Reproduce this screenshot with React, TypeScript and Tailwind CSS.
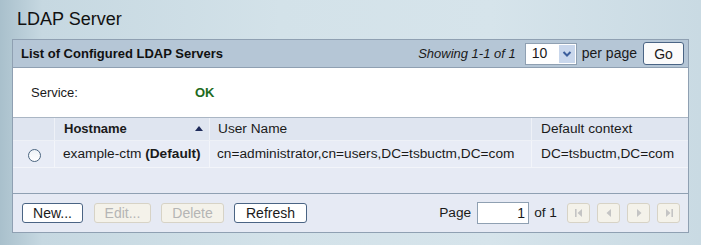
import React from "react";

const btn =
  "h-[20px] rounded-[3px] border text-[14px] leading-none flex items-center justify-center";

function NavBtn({ kind }: { kind: "first" | "prev" | "next" | "last" }) {
  return (
    <div className="w-[23px] h-[20px] rounded-[3px] border border-[#d7d3c6] bg-[#f4f2ea] flex items-center justify-center">
      <svg width="12" height="10" viewBox="0 0 12 10">
        {kind === "first" && (
          <>
            <rect x="2" y="1" width="1.6" height="8" fill="#c4c4c4" />
            <polygon points="9,1 9,9 4.5,5" fill="#c4c4c4" />
          </>
        )}
        {kind === "prev" && <polygon points="8,1 8,9 3.5,5" fill="#c4c4c4" />}
        {kind === "next" && <polygon points="4,1 4,9 8.5,5" fill="#c4c4c4" />}
        {kind === "last" && (
          <>
            <polygon points="3,1 3,9 7.5,5" fill="#c4c4c4" />
            <rect x="8.4" y="1" width="1.6" height="8" fill="#c4c4c4" />
          </>
        )}
      </svg>
    </div>
  );
}

export default function App() {
  return (
    <div
      className="w-[701px] h-[245px] overflow-hidden bg-[linear-gradient(90deg,#a9c0cc_0%,#c6d8e1_6%,#d3e2e9_40%,#d6e4eb_70%,#c9dae3_100%)] text-[#1a1a1a]"
      style={{ fontFamily: '"Liberation Sans", Arial, sans-serif' }}
    >
      <div className="pl-[17px] pt-[8px] h-[39px] text-[18px] leading-[22px] text-[#111]">LDAP Server</div>
      <div className="ml-[12px] w-[677px] border border-[#8fa0b2] bg-white">
        {/* header */}
        <div className="h-[28px] bg-[#b5c6d6] border-b border-[#8fa0b2] flex items-center pl-[8px] pr-[4px]">
          <div className="font-bold text-[13px] text-[#111]">List of Configured LDAP Servers</div>
          <div className="ml-auto flex items-center">
            <span className="italic text-[13px] mr-[9px]">Showing 1-1 of 1</span>
            <div className="w-[52px] h-[22px] border border-[#8fa0b2] bg-white flex items-center justify-between pl-[6px] pr-[1px]">
              <span className="text-[14px]">10</span>
              <div className="w-[16px] h-[18px] bg-[#c9d7ec] flex items-center justify-center">
                <svg width="10" height="8" viewBox="0 0 10 8">
                  <polyline points="1.5,2 5,5.5 8.5,2" fill="none" stroke="#3c5e9c" strokeWidth="2" />
                </svg>
              </div>
            </div>
            <span className="text-[14px] ml-[5px] mr-[6px]">per page</span>
            <div className={`${btn} w-[41px] h-[23px] border-[#4a6484] bg-[#fbfbfb]`}>Go</div>
          </div>
        </div>
        {/* service */}
        <div className="h-[50px] flex items-center text-[13px] border-b border-[#aab6c4]">
          <span className="ml-[18px] w-[164px]">Service:</span>
          <span className="font-bold text-[#1e6b1e]">OK</span>
        </div>
        {/* table header */}
        <div className="h-[23px] flex text-[13.7px] bg-[#dfe5f0] border-b border-[#eef1f7]">
          <div className="w-[42px] border-r border-[#eef1f7]" />
          <div className="w-[155px] border-r border-[#eef1f7] flex items-center pl-[9px] pr-[6px] font-bold text-[13px]">
            Hostname
            <svg className="ml-auto" width="8" height="6" viewBox="0 0 8 6">
              <polygon points="0,5 8,5 4,0" fill="#1e2a5a" />
            </svg>
          </div>
          <div className="w-[322px] border-r border-[#eef1f7] flex items-center pl-[8px]">User Name</div>
          <div className="flex-1 flex items-center pl-[9px]">Default context</div>
        </div>
        {/* data row */}
        <div className="h-[27px] flex text-[13.7px] bg-[#e8ecf6] border-b border-[#f3f5fa]">
          <div className="w-[42px] border-r border-[#f3f5fa] flex items-center justify-center pl-[2px] pt-[3px]">
            <div className="w-[13px] h-[13px] rounded-full border border-[#4b6580] bg-[linear-gradient(#eef2f6,#ffffff)]" />
          </div>
          <div className="w-[155px] border-r border-[#f3f5fa] flex items-center pl-[8px] whitespace-nowrap">
            example-ctm&nbsp;<b>(Default)</b>
          </div>
          <div className="w-[322px] border-r border-[#f3f5fa] flex items-center pl-[7px] whitespace-nowrap">
            cn=administrator,cn=users,DC=tsbuctm,DC=com
          </div>
          <div className="flex-1 flex items-center pl-[9px]">DC=tsbuctm,DC=com</div>
        </div>
        {/* empty row */}
        <div className="h-[26px] bg-[#e6eaf4] border-b border-[#8fa0b2]" />
        {/* footer */}
        <div className="h-[38px] bg-[#e6eaf4] flex items-center pl-[9px] pr-[8px] text-[14px]">
          <div className={`${btn} w-[61px] border-[#4a6484] bg-white`}>New...</div>
          <div className={`${btn} w-[57px] ml-[11px] border-[#d7d3c6] bg-[#f4f2ea] text-[#b5b5b5]`}>Edit...</div>
          <div className={`${btn} w-[63px] ml-[10px] border-[#d7d3c6] bg-[#f4f2ea] text-[#b5b5b5]`}>Delete</div>
          <div className={`${btn} w-[73px] ml-[10px] border-[#4a6484] bg-white`}>Refresh</div>
          <div className="ml-auto flex items-center">
            <span className="mr-[6px] text-[13.7px]">Page</span>
            <div className="w-[52px] h-[22px] border border-[#8fa0b2] bg-white flex items-center justify-end pr-[3px]">1</div>
            <span className="ml-[5px] mr-[10px] text-[13.7px]">of 1</span>
            <div className="flex gap-[7px]">
              <NavBtn kind="first" />
              <NavBtn kind="prev" />
              <NavBtn kind="next" />
              <NavBtn kind="last" />
            </div>
          </div>
        </div>
      </div>
    </div>
  );
}
